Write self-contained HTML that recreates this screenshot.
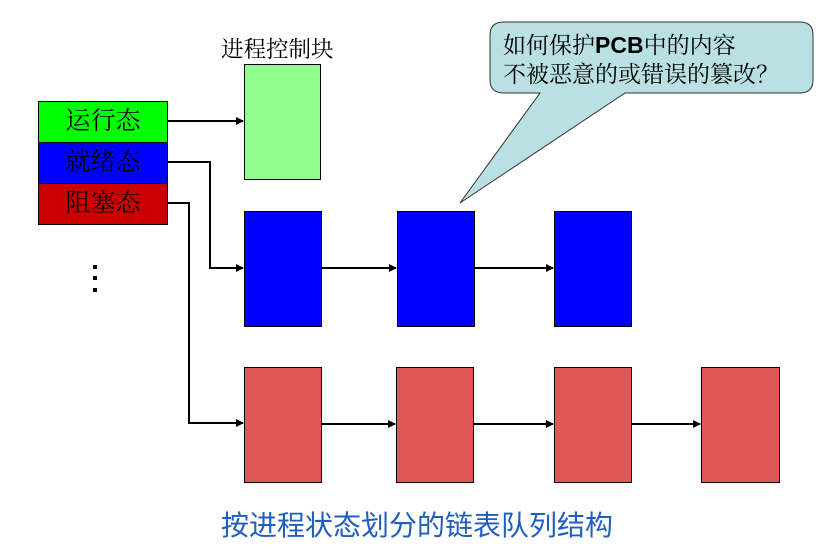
<!DOCTYPE html>
<html><head><meta charset="utf-8"><style>
body{margin:0;background:#fff;width:828px;height:553px;overflow:hidden;position:relative;font-family:"Liberation Serif","Noto Serif CJK SC","Noto Serif CJK JP",serif}
.b{position:absolute;border:1px solid #000;box-sizing:border-box}
.s{position:absolute;left:38px;width:130px;height:42px;border:1px solid #000;box-sizing:border-box;font-size:25px;text-align:center;line-height:40px;color:#000}
</style></head><body>
<div style="position:absolute;left:221px;top:32px;font-size:22.5px;white-space:nowrap">进程控制块</div>
<div class="s" style="top:101px;background:#00FF00">运行态</div>
<div class="s" style="top:142px;background:#0000FF">就绪态</div>
<div class="s" style="top:183px;background:#CC0000">阻塞态</div>
<div class="b" style="left:244px;top:64px;width:77px;height:116px;background:#90FF90"></div>
<div class="b" style="left:244px;top:211px;width:78px;height:116px;background:#0000FF"></div>
<div class="b" style="left:397px;top:211px;width:78px;height:116px;background:#0000FF"></div>
<div class="b" style="left:554px;top:211px;width:78px;height:116px;background:#0000FF"></div>
<div class="b" style="left:244px;top:367px;width:78px;height:116px;background:#DF5757"></div>
<div class="b" style="left:396px;top:367px;width:78px;height:116px;background:#DF5757"></div>
<div class="b" style="left:554px;top:367px;width:78px;height:116px;background:#DF5757"></div>
<div class="b" style="left:701px;top:367px;width:79px;height:116px;background:#DF5757"></div>
<svg width="828" height="553" style="position:absolute;left:0;top:0">
<defs><marker id="a" markerWidth="8" markerHeight="8" refX="7" refY="4" orient="auto" markerUnits="userSpaceOnUse"><path d="M0,0L8,4L0,8z" fill="#000"/></marker></defs>
<g stroke="#000" stroke-width="2" fill="none" marker-end="url(#a)">
<path d="M168,121H243"/>
<path d="M168,162H210V268H243"/>
<path d="M168,203H189V423H243"/>
<path d="M322,268H396"/><path d="M475,268H553"/>
<path d="M322,424H395"/><path d="M474,424H553"/><path d="M632,424H700"/>
</g>
<g fill="#000"><rect x="93" y="265" width="4" height="4"/><rect x="93" y="276" width="4" height="4"/><rect x="93" y="288" width="4" height="4"/></g>
<path d="M504,22H800Q813,22 813,35V80Q813,93 800,93H625L460,203L540,93H504Q490,93 490,80V35Q490,22 504,22Z" fill="#B9E0E3" stroke="#333" stroke-width="1"/>
<text x="503" y="53" font-size="23" style="font-family:'Liberation Serif','Noto Serif CJK SC','Noto Serif CJK JP',serif">如何保护<tspan style="font-family:'Liberation Sans',sans-serif" font-weight="bold">PCB</tspan>中的内容</text>
<text x="503" y="82" font-size="23" style="font-family:'Liberation Serif','Noto Serif CJK SC','Noto Serif CJK JP',serif">不被恶意的或错误的篡改？</text>
</svg>
<div style="position:absolute;left:0;width:834px;top:504px;text-align:center;font-size:28px;color:#1F5FC0;font-family:'Liberation Sans','Noto Sans CJK SC',sans-serif">按进程状态划分的链表队列结构</div>
</body></html>
